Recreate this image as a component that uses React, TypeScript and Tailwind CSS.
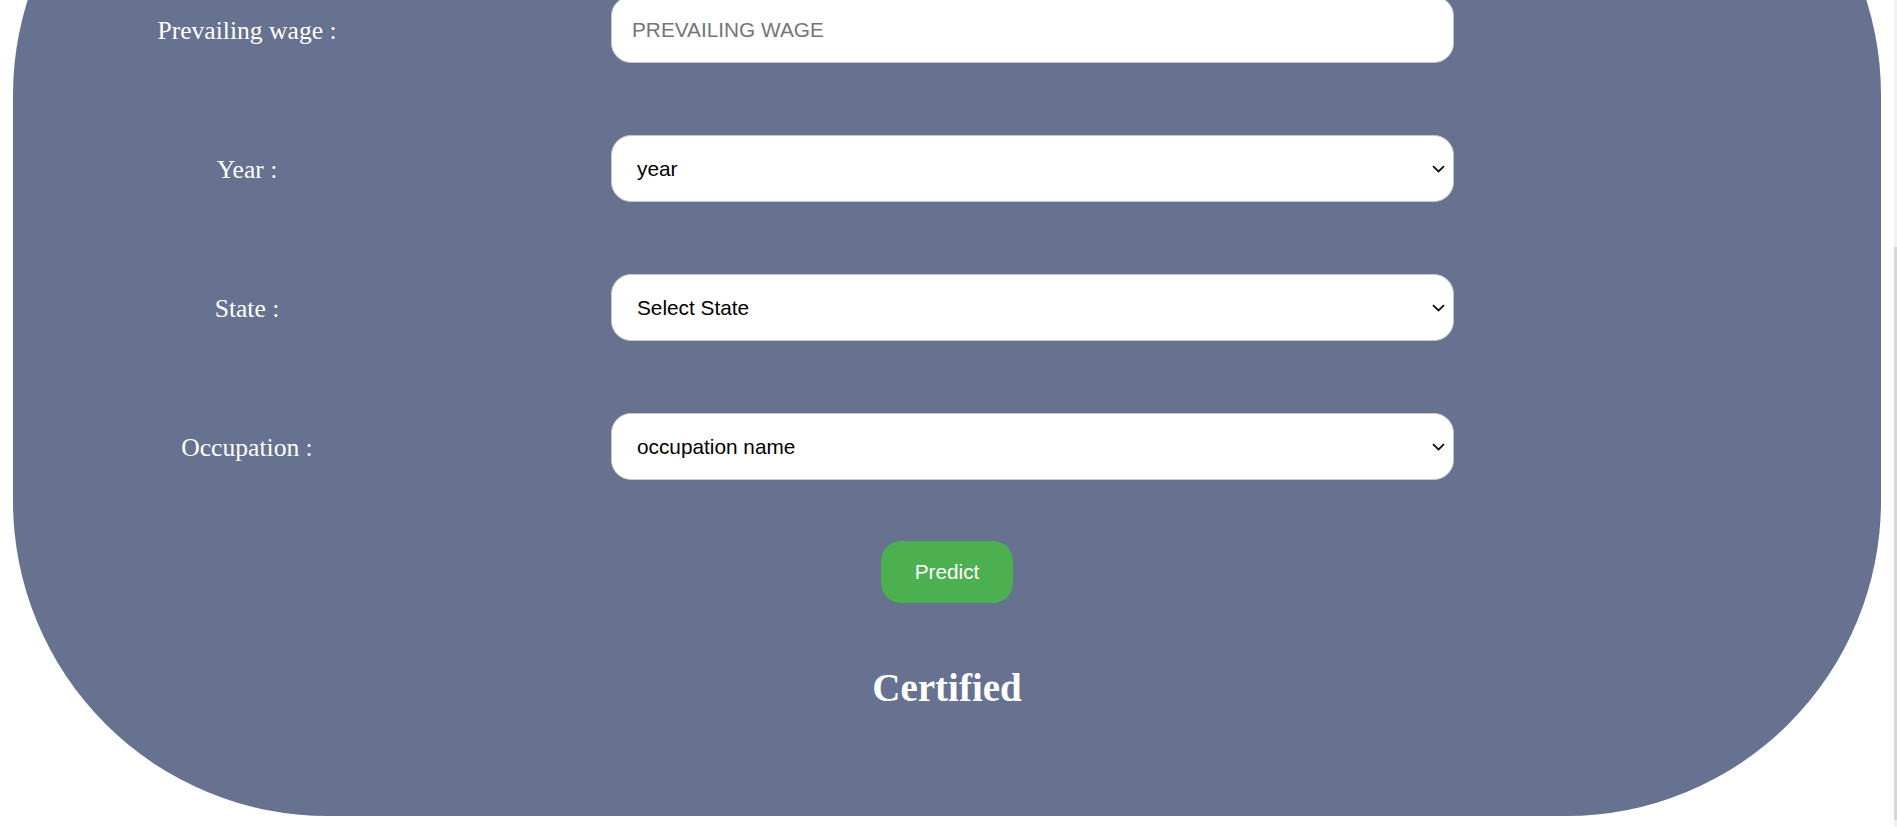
import React from "react";

const fields = [
  { label: "Prevailing wage :", kind: "input", placeholder: "PREVAILING WAGE" },
  { label: "Year :", kind: "select", value: "year" },
  { label: "State :", kind: "select", value: "Select State" },
  { label: "Occupation :", kind: "select", value: "occupation name" },
];

const controlCls =
  "h-[67px] w-[843px] rounded-[20px] border border-[#c8c8c8] bg-white text-[20.8px] text-black font-['Liberation_Sans',Arial,sans-serif] outline-none";

export default function App() {
  return (
    <div className="relative h-[827px] w-full overflow-hidden bg-white font-['Liberation_Serif','Times_New_Roman',serif]">
      {/* form card, scrolled to its bottom */}
      <div className="ml-[13px] mr-[16px] -mt-[220px] rounded-[315px] bg-[#667290] pt-[216px] pb-[108px] flex flex-col">
        <div className="flex flex-col gap-[72px]">
          {fields.map((f) => (
            <div key={f.label} className="flex items-center">
              <div className="w-[468px] pt-[3px] text-center text-[25.6px] text-white">
                {f.label}
              </div>
              <div className="relative ml-[130px]">
                {f.kind === "input" ? (
                  <input
                    type="text"
                    placeholder={f.placeholder}
                    className={`${controlCls} px-[20px] placeholder:text-[#757575]`}
                  />
                ) : (
                  <>
                    <select
                      className={`${controlCls} appearance-none pl-[25px] pr-[30px]`}
                      defaultValue={f.value}
                    >
                      <option value={f.value}>{f.value}</option>
                    </select>
                    <svg
                      className="pointer-events-none absolute right-[9px] top-1/2 -translate-y-1/2"
                      width="13"
                      height="8"
                      viewBox="0 0 13 8"
                      fill="none"
                    >
                      <path d="M1 1.2l5.5 5.3 5.5-5.3" stroke="#111" strokeWidth="1.8" />
                    </svg>
                  </>
                )}
              </div>
            </div>
          ))}
        </div>

        <div className="mt-[61px] flex justify-center">
          <button className="h-[62px] w-[132px] rounded-[20px] bg-[#4caf50] text-[20.8px] text-white font-['Liberation_Sans',Arial,sans-serif]">
            Predict
          </button>
        </div>

        <h2 className="mt-[65px] text-center text-[39px] leading-[40px] font-bold text-white">
          Certified
        </h2>
      </div>

      {/* scrollbar strip */}
      <div className="absolute right-0 top-0 h-full w-[3px] bg-[#f1f1f1]">
        <div className="mt-[247px] h-[573px] w-full bg-[#d6d6d6]" />
      </div>
    </div>
  );
}
